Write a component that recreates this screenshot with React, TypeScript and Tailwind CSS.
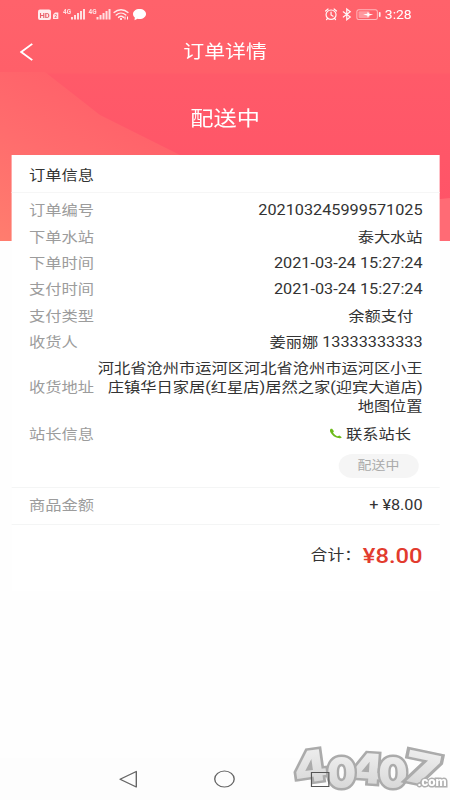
import React from "react";

interface InfoRow {
  label: string;
  value: string;
  indent?: boolean;
}

const rows: InfoRow[] = [
  { label: "订单编号", value: "202103245999571025" },
  { label: "下单水站", value: "泰大水站" },
  { label: "下单时间", value: "2021-03-24 15:27:24" },
  { label: "支付时间", value: "2021-03-24 15:27:24" },
  { label: "支付类型", value: "余额支付", indent: true },
  { label: "收货人", value: "姜丽娜 13333333333" },
];

const SignalBars = ({ x }: { x: number }) => (
  <g fill="#fff" fillOpacity="0.8">
    <text x={x} y="13.6" fontSize="6.5" fontWeight="700" textLength="8" lengthAdjust="spacingAndGlyphs">4G</text>
    <rect x={x + 8} y="17" width="2" height="2.5" />
    <rect x={x + 11} y="15" width="2" height="4.5" />
    <rect x={x + 14} y="13" width="2" height="6.5" />
    <rect x={x + 17} y="11" width="2" height="8.5" />
    <rect x={x + 20} y="9" width="2" height="10.5" />
  </g>
);

const StatusBar = () => (
  <svg className="block h-[28px] w-[388px]" viewBox="0 0 450 28" preserveAspectRatio="none">
    {/* HD + sim */}
    <rect x="38" y="9.5" width="13" height="10.5" rx="2" fill="#fff" fillOpacity="0.88" />
    <text x="39.4" y="17.7" fontSize="8" fontWeight="700" textLength="10.2" lengthAdjust="spacingAndGlyphs" fill="#e9606a">HD</text>
    <path d="M53 19V14.5L55 12.6h3.3V19z" fill="#fff" fillOpacity="0.85" />
    <text x="54.2" y="18.4" fontSize="5" fontWeight="700" fill="#f0606a">2</text>
    <SignalBars x={63} />
    <SignalBars x={88.5} />
    {/* wifi */}
    <g fill="none" stroke="#fff" strokeOpacity="0.88" strokeWidth="1.4" strokeLinecap="round">
      <path d="M114 12.4c4-3.6 10-3.6 14 0" />
      <path d="M116.2 15c2.8-2.5 6.8-2.5 9.6 0" />
      <path d="M118.5 17.4c1.5-1.3 3.5-1.3 5 0" />
    </g>
    <circle cx="121" cy="19" r="1.1" fill="#fff" />
    <path d="M125 16.5v3M127.5 16.5v3" stroke="#fff" strokeWidth="1" />
    {/* message bubble */}
    <path d="M139.5 9c3.7 0 6.5 2.1 6.5 5s-2.8 5-6.5 5c-.7 0-1.4-.1-2-.2L134.5 20.3l.3-2.7C133.6 16.7 133 15.4 133 14c0-2.9 2.8-5 6.5-5z" fill="#fff" />
    {/* alarm */}
    <g fill="none" stroke="#fff" strokeOpacity="0.95" strokeWidth="1.2" strokeLinecap="round">
      <ellipse cx="331" cy="14.7" rx="5" ry="4.7" />
      <path d="M331 12v3l2 1.2M325.5 11l2.5-2M336.5 11L334 9M327.5 18.5l-1 1M334.5 18.5l1 1" />
      {/* bluetooth */}
      <path d="M343.2 11.8l7 5.2-3.5 2.7V9l3.5 2.8-7 5.2" />
    </g>
    {/* battery */}
    <rect x="356.8" y="9.8" width="20.5" height="9.6" rx="2" fill="none" stroke="#fff" strokeOpacity="0.55" />
    <rect x="358.5" y="11.3" width="11" height="6.6" rx="1" fill="#fff" fillOpacity="0.35" />
    <path d="M363 14.6l4.2-.9.5-2 1.5 2.1 4 .8-4 1-1.5 2-.5-2z" fill="#fff" />
    <rect x="378.8" y="12" width="1.7" height="5" rx="0.8" fill="#fff" fillOpacity="0.9" />
    <text x="384.8" y="19.2" fontSize="13" fill="#fff" textLength="26.8" lengthAdjust="spacingAndGlyphs">3:28</text>
  </svg>
);

const Watermark = () => (
  <svg
    className="absolute top-[700px] left-[250px] h-[100px] w-[138px]"
    viewBox="290 700 160 100"
    preserveAspectRatio="none"
    fontFamily="Inter, sans-serif"
    fontWeight="900"
  >
    <defs>
      <linearGradient id="silver" x1="0" y1="0" x2="0" y2="1">
        <stop offset="0" stopColor="#f3f3f3" />
        <stop offset="1" stopColor="#d2d2d2" />
      </linearGradient>
    </defs>
    <g fill="url(#silver)" stroke="#ababab" strokeWidth="5" strokeLinejoin="miter" paintOrder="stroke">
      <text transform="translate(296 784) rotate(-8)" fontSize="43" textLength="33" lengthAdjust="spacingAndGlyphs">4</text>
      <text transform="translate(350 782) rotate(4)" fontSize="41" textLength="32" lengthAdjust="spacingAndGlyphs">4</text>
      <text x="327" y="788.5" fontSize="43" textLength="29" lengthAdjust="spacingAndGlyphs">0</text>
      <text x="378.5" y="788.5" fontSize="43" textLength="29" lengthAdjust="spacingAndGlyphs">0</text>
      <text transform="translate(402 780) rotate(12)" fontSize="43" textLength="35" lengthAdjust="spacingAndGlyphs">7</text>
    </g>
    <text x="417.5" y="786.5" fontSize="13" fontFamily="Roboto, sans-serif" textLength="29" lengthAdjust="spacingAndGlyphs" fill="#fff" stroke="#b0b0b0" strokeWidth="3" paintOrder="stroke">.com</text>
  </svg>
);

export default function App() {
  return (
    <div className="h-[800px] w-[450px] overflow-hidden bg-[#fefefe]">
      {/* the screen is laid out 388px wide and widened to fill the frame */}
      <div className="relative flex h-[800px] w-[388px] origin-top-left scale-x-[1.16] flex-col font-['Roboto','Noto_Sans_CJK_SC',sans-serif] text-[14px] text-[#333]">
        <svg className="absolute top-0 left-0 h-[241px] w-[388px]" viewBox="0 0 450 241" preserveAspectRatio="none">
          <defs>
            <linearGradient id="base" x1="0" y1="0" x2="0" y2="1">
              <stop offset="0" stopColor="#ff626b" />
              <stop offset="0.3" stopColor="#ff5f69" />
              <stop offset="0.31" stopColor="#ff5a69" />
              <stop offset="1" stopColor="#ff5267" />
            </linearGradient>
            <linearGradient id="warm" x1="0.6" y1="0" x2="0" y2="1">
              <stop offset="0" stopColor="#ff5e69" />
              <stop offset="0.5" stopColor="#ff6c6d" />
              <stop offset="1" stopColor="#ff7d6e" />
            </linearGradient>
          </defs>
          <rect width="450" height="241" fill="url(#base)" />
          <path d="M0 72h45l55 43 80 40v86H0z" fill="url(#warm)" />
          <path d="M430 200l20-2v43h-20z" fill="#ff6b75" />
        </svg>

        <header className="relative text-white">
          <StatusBar />
          <div className="flex h-[46px] items-center px-[17px]">
            <svg className="mt-[2px] h-[18px] w-[12px]" viewBox="0 0 12 18" fill="none" stroke="#fff" strokeWidth="1.7">
              <path d="M10.8 .8L1.2 9l9.6 8.2" />
            </svg>
            <h1 className="flex-1 pt-[1.5px] pr-[12px] text-center text-[18px] leading-[46px]">订单详情</h1>
          </div>
          <p className="h-[81px] pt-[28px] text-center text-[20px] leading-[34px]">配送中</p>
        </header>

        <main className="relative mx-[9.5px] h-[436px] bg-white">
          <h2 className="h-[38px] border-b border-[#f6f6f6] px-[15.5px] text-[14px] leading-[40px]">订单信息</h2>

          <div className="pt-[4px] pr-[14.2px] pl-[15.5px]">
            {rows.map((row) => (
              <div key={row.label} className="flex h-[26.4px] items-center justify-between leading-[26px]">
                <span className="text-[#9c9c9c]">{row.label}</span>
                <span className={row.indent ? "pr-[8px]" : ""}>{row.value}</span>
              </div>
            ))}

            <div className="mt-[4px] flex h-[57px] items-center justify-between leading-[19px]">
              <span className="shrink-0 text-[#9c9c9c]">收货地址</span>
              <span className="text-right whitespace-nowrap">
                河北省沧州市运河区河北省沧州市运河区小王
                <br />
                庄镇华日家居(红星店)居然之家(迎宾大道店)
                <br />
                地图位置
              </span>
            </div>

            <div className="mt-[5px] flex h-[26px] items-center justify-between">
              <span className="text-[#9c9c9c]">站长信息</span>
              <span className="flex items-center gap-[3px] pr-[10px]">
                <svg className="mb-[2px] h-[11px] w-[11px]" viewBox="0 0 11 11">
                  <path
                    d="M1.2.8C.2 1.6.2 3 1.1 4.8c1.3 2.6 3.6 4.7 6.3 5.3 1.5.3 2.7 0 3.2-.9L8.6 7.5l-1.5.8C5.5 7.7 3.9 6.2 3.1 4.5l.8-1.3L2.3.8z"
                    fill="#6dbb1a"
                  />
                </svg>
                联系站长
              </span>
            </div>

            <div className="flex justify-end pt-[7px] pr-[3.5px]">
              <button className="h-[24px] w-[69px] rounded-full bg-[#f5f5f5] text-[12px] leading-[23px] text-[#aaa]">配送中</button>
            </div>
          </div>

          <div className="mt-[9px] flex h-[37.5px] items-center justify-between border-y border-[#f4f5f5] pr-[14.2px] pb-[2px] pl-[15.5px]">
            <span className="text-[#9c9c9c]">商品金额</span>
            <span>+ ¥8.00</span>
          </div>

          <div className="flex h-[63px] items-center justify-end gap-[1.5px] pr-[14.2px]">
            <span className="text-[14.5px]">合计：</span>
            <span className="text-[20.5px] font-medium text-[#e23b2e]">¥8.00</span>
          </div>
        </main>

        <nav className="relative mt-auto flex h-[42px] bg-[#fdfdfd] pl-[102px]">
          <svg className="mt-[12px] h-[19px] w-[17px]" viewBox="0 0 17 19" fill="none" stroke="#666" strokeWidth="1.2" strokeLinejoin="round">
            <path d="M15.5 1.5v15.5L1.5 9.3z" />
          </svg>
          <svg className="mt-[12px] ml-[65px] h-[18px] w-[19px]" viewBox="0 0 19 18" fill="none" stroke="#666" strokeWidth="1.2">
            <ellipse cx="9.5" cy="9" rx="8.4" ry="8" />
          </svg>
        </nav>

        <Watermark />
        {/* recents key sits above the logo */}
        <div className="absolute top-[772px] left-[268px] h-[15px] w-[16px] border border-[#555]" />
      </div>
    </div>
  );
}
